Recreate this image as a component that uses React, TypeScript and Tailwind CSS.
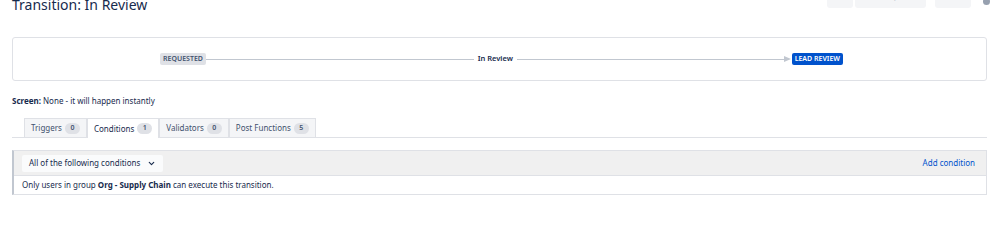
import { ChevronDown } from "lucide-react";

const TABS = [
  { label: "Triggers", count: 0 },
  { label: "Conditions", count: 1, active: true },
  { label: "Validators", count: 0 },
  { label: "Post Functions", count: 5 },
];

export default function App() {
  return (
    <div
      className="relative h-[250px] w-[999px] overflow-hidden bg-white text-[#172b4d]"
      style={{ fontFamily: '"Noto Sans", "Open Sans", sans-serif' }}
    >
      {/* Page header */}
      <div className="-mt-[16px] flex h-[24px] items-center justify-between pl-[12px] pr-[9px]">
        <h1 className="mt-[18px] text-[14px] leading-none font-normal text-[#172b4d]">Transition: In Review</h1>
        <div className="flex items-center gap-[2px]">
          <button className="h-[24px] w-[26px] rounded-[3px] bg-[#f4f5f7] text-[8px] text-[#c1c7d0]">Edit</button>
          <button className="h-[24px] w-[71px] rounded-[3px] bg-[#f4f5f7] text-[8px] text-[#c1c7d0]">View Properties</button>
          <button className="ml-[7px] h-[24px] w-[36px] rounded-[3px] bg-[#f4f5f7] text-[8px] text-[#c1c7d0]">Delete</button>
          <span className="mt-[10px] ml-[10px] h-[7px] w-[7px] rounded-full bg-[#97a0af]" />
        </div>
      </div>

      {/* Transition diagram */}
      <div className="mx-[12px] mt-[29px] flex h-[44px] items-center rounded-[3px] border border-[#dfe1e6] bg-white pl-[147px] pr-[143px]">
        <span className="rounded-[2px] bg-[#dfe1e6] px-[3px] py-[1px] text-[7px] leading-[10px] font-semibold text-[#42526e]">
          REQUESTED
        </span>
        <div className="h-px flex-1 bg-[#c1c7d0]" />
        <span className="px-[4px] text-[7.5px] font-semibold text-[#172b4d]">In Review</span>
        <div className="h-px flex-1 bg-[#c1c7d0]" />
        <svg width="7" height="6" viewBox="0 0 7 6" className="-ml-px">
          <path d="M0 0 L7 3 L0 6 Z" fill="#c1c7d0" />
        </svg>
        <span className="ml-px rounded-[2px] bg-[#0052cc] px-[3px] py-[1px] text-[7px] leading-[10px] font-semibold text-white">
          LEAD REVIEW
        </span>
      </div>

      {/* Screen */}
      <p className="mt-[14px] pl-[12px] text-[8px] leading-[12px] text-[#172b4d]">
        <span className="font-bold">Screen:</span> None - it will happen instantly
      </p>

      {/* Tabs */}
      <div className="mx-[12px] mt-[11px] flex items-end border-b border-[#dfe1e6] pl-[12px]">
        {TABS.map((tab) => (
          <div
            key={tab.label}
            className={
              tab.active
                ? "-mb-px flex h-[20px] items-center gap-[3px] border border-b-0 border-[#dfe1e6] bg-white px-[6px] text-[8px] text-[#172b4d]"
                : "flex h-[19px] items-center gap-[3px] border border-b-0 border-[#dfe1e6] bg-[#f4f5f7] px-[6px] text-[8px] text-[#42526e]"
            }
          >
            <span>{tab.label}</span>
            <span className="flex h-[11px] min-w-[15px] items-center justify-center rounded-full bg-[#dfe1e6] px-[4px] text-[7px] font-semibold text-[#42526e]">
              {tab.count}
            </span>
          </div>
        ))}
      </div>

      {/* Conditions panel */}
      <div className="mx-[12px] mt-[12px] border border-l-[2px] border-[#dfe1e6] border-l-[#c1c7d0]">
        <div className="flex h-[25px] items-center justify-between border-b border-[#dfe1e6] bg-[#f0f0f0] pl-[8px] pr-[11px]">
          <div className="flex h-[17px] w-[141px] items-center justify-between rounded-[2px] bg-[#fafbfc] pl-[7px] pr-[7px] text-[8px] text-[#172b4d]">
            <span>All of the following conditions</span>
            <ChevronDown className="h-[9px] w-[9px]" strokeWidth={3} />
          </div>
          <span className="text-[8px] text-[#0052cc]">Add condition</span>
        </div>
        <div className="flex h-[18px] items-center pl-[8px] text-[8px] text-[#172b4d]">
          Only users in group&nbsp;<span className="font-bold">Org - Supply Chain</span>&nbsp;can execute this transition.
        </div>
      </div>
    </div>
  );
}
